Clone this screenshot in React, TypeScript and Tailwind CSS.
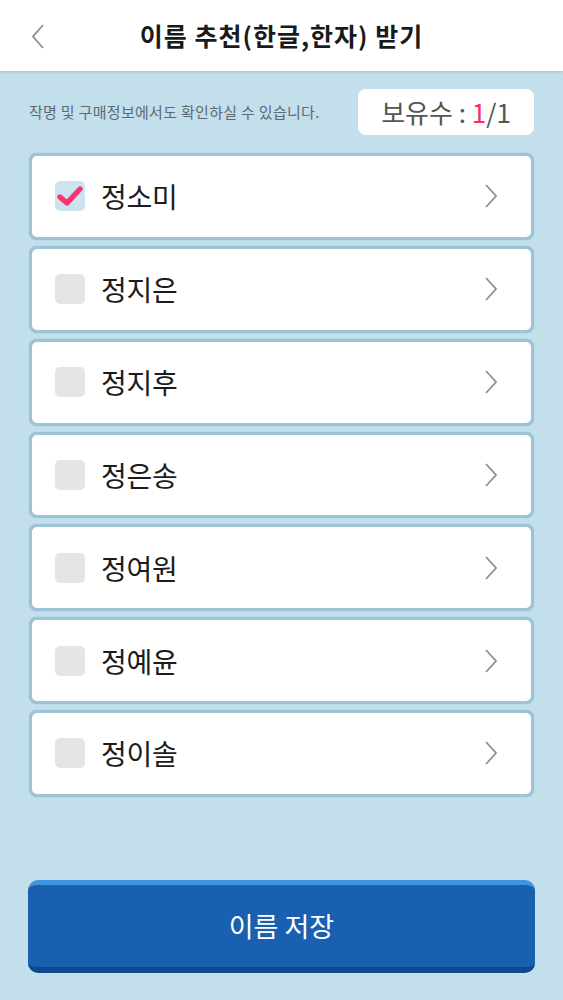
import React from "react";

const names = ["정소미", "정지은", "정지후", "정은송", "정여원", "정예윤", "정이솔"];
const font = { fontFamily: '"Noto Sans CJK KR", sans-serif' };

function Row({ name, checked }: { name: string; checked: boolean }) {
  return (
    <div className="flex h-[86.85px] items-center rounded-[8px] border-[3px] border-[#9cc3d6] bg-white pl-[23px] pr-[33px] shadow-[0_0_1px_rgba(120,165,190,0.8)]">
      <div className={`flex h-[30px] w-[30px] items-center justify-center rounded-[5px] ${checked ? "bg-[#cde3ef]" : "bg-[#e5e5e5]"}`}>
        {checked && (
          <svg width="28" height="24" viewBox="0 0 28 24" fill="none">
            <path d="M4 13L11 19L24 5" stroke="#f7356f" strokeWidth="5.4" strokeLinecap="round" strokeLinejoin="round" />
          </svg>
        )}
      </div>
      <span className="ml-[16px] flex-1 text-[28px] leading-none tracking-[-0.3px] text-[#1c1c1c]">{name}</span>
      <svg width="14" height="26" viewBox="0 0 14 26" fill="none">
        <path d="M2 2L12 13L2 24" stroke="#8f8f8f" strokeWidth="1.8" />
      </svg>
    </div>
  );
}

export default function App() {
  return (
    <div className="flex h-[1000px] w-[563px] flex-col overflow-hidden bg-[#c3dfeb]" style={font}>
      <header className="relative flex h-[71px] items-center justify-center bg-white shadow-[0_1px_3px_rgba(100,140,160,0.35)]">
        <svg className="absolute left-[30px] top-[23px]" width="16" height="27" viewBox="0 0 16 27" fill="none">
          <path d="M13 2L3 13.5L13 25" stroke="#8f8f8f" strokeWidth="1.8" />
        </svg>
        <h1 className="text-[25px] font-bold leading-none tracking-[1px] text-[#1a1a1a]">이름 추천(한글,한자) 받기</h1>
      </header>

      <div className="mt-[18px] flex h-[46px] items-center justify-between pl-[29px] pr-[29px]">
        <p className="text-[15px] tracking-[0.3px] text-[#5b6b74]">작명 및 구매정보에서도 확인하실 수 있습니다.</p>
        <div className="flex h-[46px] w-[176px] items-center justify-center rounded-[8px] bg-white text-[26px] leading-none text-[#555]">
          <span>보유수 :&nbsp;</span>
          <span className="text-[#f2306d]">1</span>
          <span>/1</span>
        </div>
      </div>

      <div className="mt-[18px] flex flex-col gap-[6px] px-[29px]">
        {names.map((n, i) => (
          <Row key={n} name={n} checked={i === 0} />
        ))}
      </div>

      <button className="mx-[28px] mt-[83px] h-[93px] rounded-[10px] border-t-[5px] border-b-[6px] border-t-[#3f95df] border-b-[#0d4a8c] bg-[#1a60b0] text-[27px] text-white">
        이름 저장
      </button>
    </div>
  );
}
